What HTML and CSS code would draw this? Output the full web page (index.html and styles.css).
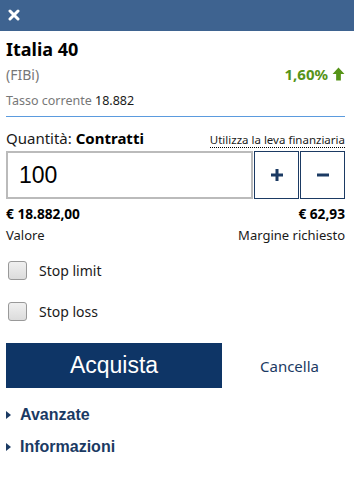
FILE: index.html
```html
<!DOCTYPE html>
<html>
<head>
<meta charset="utf-8">
<link rel="stylesheet" href="styles.css">
</head>
<body>
<div class="topbar">
  <svg class="close" width="12" height="12" viewBox="0 0 12 12"><path d="M2 2 L10 10 M10 2 L2 10" stroke="#fff" stroke-width="3" stroke-linecap="round"/></svg>
</div>
<div class="panel">
  <div class="title">Italia 40</div>
  <div class="row sub">
    <span class="code">(FIBi)</span>
    <span class="change">1,60% <svg width="13" height="14" viewBox="0 0 12 13"><path d="M6 0.5 L11.5 6.5 L8.2 6.5 L8.2 12.5 L3.8 12.5 L3.8 6.5 L0.5 6.5 Z" fill="#569418"/></svg></span>
  </div>
  <div class="rate"><span class="rate-label">Tasso corrente</span> <span class="rate-val">18.882</span></div>
  <div class="row qty-head">
    <span class="qty-label">Quantità: <b>Contratti</b></span>
    <span class="leva">Utilizza la leva finanziaria</span>
  </div>
  <div class="qty-row">
    <div class="qty-input">100</div>
    <button class="step"><svg width="14" height="14" viewBox="0 0 14 14"><path d="M7 1 V13 M1 7 H13" stroke="#1b3a63" stroke-width="3"/></svg></button>
    <button class="step"><svg width="14" height="14" viewBox="0 0 14 14"><path d="M1 7 H13" stroke="#1b3a63" stroke-width="3"/></svg></button>
  </div>
  <div class="row vals">
    <span class="val">€ 18.882,00</span>
    <span class="val">€ 62,93</span>
  </div>
  <div class="row labels">
    <span>Valore</span>
    <span>Margine richiesto</span>
  </div>
  <label class="check first"><span class="box"></span>Stop limit</label>
  <label class="check second"><span class="box"></span>Stop loss</label>
  <div class="actions">
    <button class="buy">Acquista</button>
    <span class="cancel">Cancella</span>
  </div>
  <div class="expander first-exp"><span class="tri"></span>Avanzate</div>
  <div class="expander second-exp"><span class="tri"></span>Informazioni</div>
</div>
</body>
</html>
```
FILE: styles.css
```css
html, body { margin: 0; padding: 0; background: #fff; }
body { font-family: "Noto Sans", "Open Sans", sans-serif; color: #1a1a1a; width: 354px; }
.topbar { height: 31px; background: #3e6390; display: flex; align-items: center; padding-left: 8px; }
.close { display: block; margin-top: -2px; }
.panel { padding: 0 9px 0 6px; }
.row { display: flex; justify-content: space-between; align-items: baseline; }
.title { font-size: 18px; font-weight: 700; color: #000; margin-top: 6px; line-height: 24px; }
.sub { margin-top: 3px; line-height: 20px; }
.code { font-size: 14px; color: #777; }
.change { font-size: 15px; font-weight: 700; color: #569418; display: flex; align-items: center; gap: 4px; }
.rate { margin-top: 8px; font-size: 12.5px; line-height: 16px; padding-bottom: 7px; border-bottom: 1px solid #5b9bde; }
.rate-label { color: #777; }
.rate-val { color: #1a1a1a; }
.qty-head { margin-top: 11px; line-height: 20px; }
.qty-label { font-size: 15px; color: #1a1a1a; }
.qty-label b { font-weight: 700; color: #000; }
.leva { font-size: 11.5px; color: #1a1a1a; border-bottom: 1px dotted #000; line-height: 14px; }
.qty-row { display: flex; gap: 1px; margin-top: 3px; height: 48px; }
.qty-input { flex: 1; border: 2px solid #bbb; font-family: "Liberation Sans", Arial, sans-serif; font-size: 23px; color: #000; display: flex; align-items: center; padding-left: 11px; box-sizing: border-box; }
.step { width: 45px; height: 48px; border: 1px solid #1b3a63; background: #fff; display: flex; align-items: center; justify-content: center; padding: 0; box-sizing: border-box; }
.vals { margin-top: 6px; font-size: 13.7px; font-weight: 700; color: #000; line-height: 18px; }
.labels { font-size: 13px; color: #1a1a1a; line-height: 18px; margin-top: 3px; }
.check { display: flex; align-items: center; font-size: 14px; color: #1a1a1a; height: 20px; }
.check.first { margin-top: 16px; }
.check.second { margin-top: 21px; }
.box { width: 19px; height: 19px; border: 1px solid #999; border-radius: 3px; background: linear-gradient(#f0f0f0, #dcdcdc); margin-left: 2px; margin-right: 12px; box-sizing: border-box; }
.actions { display: flex; align-items: center; margin-top: 22px; }
.buy { width: 216px; height: 45px; background: #0e3566; color: #fff; border: 0; font-family: "Liberation Sans", Arial, sans-serif; font-size: 23px; padding: 0; }
.cancel { font-size: 15px; color: #1b3a63; margin-left: 38px; }
.expander { display: flex; align-items: center; font-family: "Liberation Sans", Arial, sans-serif; font-weight: 700; font-size: 16px; color: #1b3a63; line-height: 20px; }
.first-exp { margin-top: 17px; }
.second-exp { margin-top: 12px; }
.tri { width: 0; height: 0; border-top: 4px solid transparent; border-bottom: 4px solid transparent; border-left: 5px solid #1b3a63; margin-right: 9px; }
```
